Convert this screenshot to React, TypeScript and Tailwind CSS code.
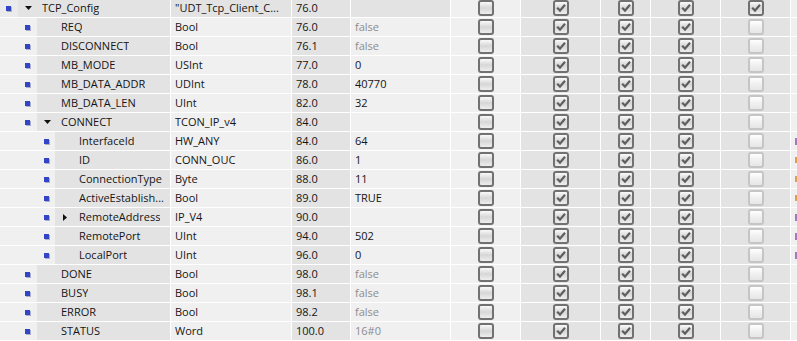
import React from 'react';

type Row = {
  level: 0 | 1 | 2;
  exp?: 'down' | 'right';
  name: string;
  type: string;
  offset: string;
  start: string;
  gray?: boolean;
  head?: boolean;
  mark?: 'purple' | 'orange';
};

const rows: Row[] = [
  { level: 0, exp: 'down', name: 'TCP_Config', type: '"UDT_Tcp_Client_C...', offset: '76.0', start: '', head: true },
  { level: 1, name: 'REQ', type: 'Bool', offset: '76.0', start: 'false', gray: true },
  { level: 1, name: 'DISCONNECT', type: 'Bool', offset: '76.1', start: 'false', gray: true },
  { level: 1, name: 'MB_MODE', type: 'USInt', offset: '77.0', start: '0' },
  { level: 1, name: 'MB_DATA_ADDR', type: 'UDInt', offset: '78.0', start: '40770' },
  { level: 1, name: 'MB_DATA_LEN', type: 'UInt', offset: '82.0', start: '32' },
  { level: 1, exp: 'down', name: 'CONNECT', type: 'TCON_IP_v4', offset: '84.0', start: '' },
  { level: 2, name: 'InterfaceId', type: 'HW_ANY', offset: '84.0', start: '64', mark: 'purple' },
  { level: 2, name: 'ID', type: 'CONN_OUC', offset: '86.0', start: '1', mark: 'orange' },
  { level: 2, name: 'ConnectionType', type: 'Byte', offset: '88.0', start: '11', mark: 'orange' },
  { level: 2, name: 'ActiveEstablish...', type: 'Bool', offset: '89.0', start: 'TRUE', mark: 'orange' },
  { level: 2, exp: 'right', name: 'RemoteAddress', type: 'IP_V4', offset: '90.0', start: '', mark: 'purple' },
  { level: 2, name: 'RemotePort', type: 'UInt', offset: '94.0', start: '502', mark: 'purple' },
  { level: 2, name: 'LocalPort', type: 'UInt', offset: '96.0', start: '0', mark: 'purple' },
  { level: 1, name: 'DONE', type: 'Bool', offset: '98.0', start: 'false', gray: true },
  { level: 1, name: 'BUSY', type: 'Bool', offset: '98.1', start: 'false', gray: true },
  { level: 1, name: 'ERROR', type: 'Bool', offset: '98.2', start: 'false', gray: true },
  { level: 1, name: 'STATUS', type: 'Word', offset: '100.0', start: '16#0', gray: true },
];

const indent = {
  0: { box: 'w-[18px]', dot: 'ml-[6px]' },
  1: { box: 'w-[37px]', dot: 'ml-[25px]' },
  2: { box: 'w-[55px]', dot: 'ml-[44px]' },
};

function Check({ checked, disabled }: { checked?: boolean; disabled?: boolean }) {
  const look = disabled
    ? 'border-[#c5c5c5] from-[#ffffff] via-[#f0f0f0] to-[#e6e6e6]'
    : 'border-[#717171] from-[#fafafa] via-[#d6d6d6] to-[#eeeeee]';
  return (
    <div className={`w-4 h-4 rounded-[3px] border-2 bg-linear-to-b flex items-center justify-center ${look}`}>
      {checked && (
        <svg width="12" height="12" viewBox="0 0 12 12">
          <path d="M2.2 5.8 L5 8.6 L10 2.8" fill="none" stroke="#5e5e5e" strokeWidth="2.2" />
        </svg>
      )}
    </div>
  );
}

function Bullet() {
  return <div className="w-[5px] h-[5px] bg-[#3145c6] shadow-[1px_1px_0_#a9adc9]" />;
}

export default function App() {
  return (
    <div className="w-[797px] h-[341px] overflow-hidden bg-white text-[11px] text-[#151515] font-['Open_Sans',sans-serif]">
      <div className="flex flex-col gap-px mt-[-1px]">
        {rows.map((r, i) => {
          const lv = indent[r.level];
          const dark = 'bg-[#e3e3e3]';
          const light = 'bg-[#f0f0f0]';
          const headCell = r.head ? dark : light;
          return (
            <div key={i} className="flex h-[18px] gap-px leading-[18px] whitespace-nowrap">
              <div className="w-[170px] flex overflow-hidden">
                <div className={`${lv.box} ${r.head ? 'bg-[#ebebeb]' : light} flex items-center`}>
                  <div className={lv.dot}>
                    <Bullet />
                  </div>
                </div>
                <div className={`flex-1 ${dark} flex items-center min-w-0`}>
                  <div className="w-[24px] shrink-0 flex items-center">
                    {r.exp === 'down' && (
                      <svg className="ml-[7px]" width="7" height="4" viewBox="0 0 7 4">
                        <path d="M0 0 H7 L3.5 4 Z" fill="#111" />
                      </svg>
                    )}
                    {r.exp === 'right' && (
                      <svg className="ml-[8px]" width="4" height="7" viewBox="0 0 4 7">
                        <path d="M0 0 V7 L4 3.5 Z" fill="#111" />
                      </svg>
                    )}
                  </div>
                  <span className="overflow-hidden">{r.name}</span>
                </div>
              </div>
              <div className={`w-[120px] pl-1 overflow-hidden ${headCell}`}>{r.type}</div>
              <div className={`w-[58px] pl-1 ${dark}`}>{r.offset}</div>
              <div className={`w-[99px] pl-1 ${headCell} ${r.gray ? 'text-[#8d8d8d]' : ''}`}>{r.start}</div>
              <div className={`w-[69px] ${light} flex items-center justify-center`}>
                <Check />
              </div>
              <div className={`w-[79px] ${dark} flex items-center justify-center`}>
                <Check checked />
              </div>
              <div className={`w-[49px] ${dark} flex items-center justify-center`}>
                <Check checked />
              </div>
              <div className={`w-[69px] ${dark} flex items-center justify-center`}>
                <Check checked />
              </div>
              <div className={`w-[69px] ${dark} flex items-center justify-center`}>
                {r.head ? <Check checked /> : <Check disabled />}
              </div>
              <div className={`flex-1 ${light} flex items-center`}>
                {r.mark === 'purple' && <div className="ml-[4px] w-[2px] h-[7px] bg-[#a678b8]" />}
                {r.mark === 'orange' && <div className="ml-[4px] w-[2px] h-[6px] bg-[#dfa04c]" />}
              </div>
            </div>
          );
        })}
      </div>
    </div>
  );
}
